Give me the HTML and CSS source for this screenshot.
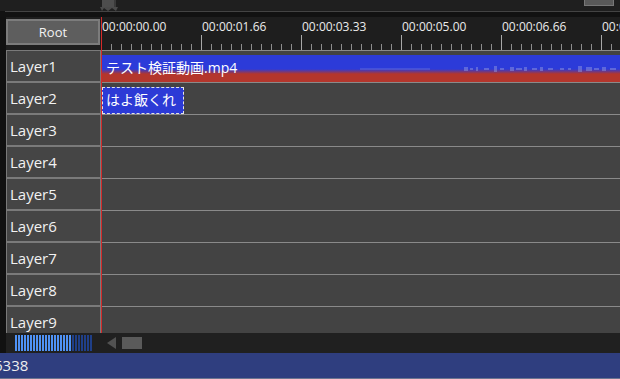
FILE: index.html
```html
<!DOCTYPE html>
<html>
<head>
<meta charset="utf-8">
<link rel="stylesheet" href="styles.css">
</head>
<body>
<div class="app">
  <div class="topbar">
    <svg class="marker" width="20" height="11" viewBox="0 0 20 11">
      <rect x="2" y="0" width="12" height="7" fill="#4d4d4d"/>
      <polygon points="0,7 18,7 16,11 12,8 8,11 4,8 2,11" fill="#4a4a4a"/>
      <rect x="14" y="0" width="2" height="7" fill="#3a3a3a"/>
    </svg>
    <div class="topbox"></div>
  </div>
  <div class="topline"></div>
  <div class="gap"></div>
  <div class="main">
    <div class="row header">
      <div class="labelcol"><div class="root">Root</div></div>
      <div class="ruler">
        <div class="labels">
          <span>00:00:00.00</span><span>00:00:01.66</span><span>00:00:03.33</span><span>00:00:05.00</span><span>00:00:06.66</span><span>00:00:08.33</span>
        </div>
        <div class="ticks"></div>
      </div>
    </div>
    <div class="row">
      <div class="label">Layer1</div>
      <div class="track">
        <div class="clip video">
          <span class="cliptext">テスト検証動画.mp4</span>
          <svg class="wave" width="260" height="8" viewBox="0 0 260 8">
            <g fill="#9aa0e0" opacity="0.45">
              <rect x="0" y="3.5" width="70" height="1"/>
              <rect x="104" y="2" width="4" height="4"/><rect x="110" y="3" width="3" height="2"/><rect x="116" y="2" width="2" height="4"/>
              <rect x="124" y="3" width="5" height="2"/><rect x="134" y="1" width="3" height="6"/><rect x="140" y="3" width="4" height="2"/>
              <rect x="150" y="2" width="4" height="4"/><rect x="156" y="3" width="6" height="2"/><rect x="164" y="2" width="3" height="4"/>
              <rect x="172" y="3" width="5" height="2"/><rect x="180" y="2" width="3" height="4"/><rect x="188" y="3" width="5" height="2"/>
              <rect x="200" y="3" width="4" height="2"/><rect x="208" y="3" width="3" height="2"/><rect x="218" y="1" width="4" height="6"/>
              <rect x="226" y="2" width="6" height="4"/><rect x="234" y="3" width="5" height="2"/><rect x="242" y="2" width="4" height="4"/><rect x="250" y="3" width="6" height="2"/>
            </g>
          </svg>
        </div>
      </div>
    </div>
    <div class="row">
      <div class="label">Layer2</div>
      <div class="track"><div class="clip text">はよ飯くれ</div></div>
    </div>
    <div class="row"><div class="label">Layer3</div><div class="track"></div></div>
    <div class="row"><div class="label">Layer4</div><div class="track"></div></div>
    <div class="row"><div class="label">Layer5</div><div class="track"></div></div>
    <div class="row"><div class="label">Layer6</div><div class="track"></div></div>
    <div class="row"><div class="label">Layer7</div><div class="track"></div></div>
    <div class="row"><div class="label">Layer8</div><div class="track"></div></div>
    <div class="row"><div class="label">Layer9</div><div class="track"></div></div>
    <div class="playhead"></div>
  </div>
  <div class="scrollbar">
    <div class="meter"><div class="meter-on"></div><div class="meter-off"></div></div>
    <div class="arrow"></div>
    <div class="thumb"></div>
  </div>
  <div class="status"><span class="status-text">6338</span></div>
</div>
</body>
</html>
```
FILE: styles.css
```css
* { box-sizing: border-box; }
html, body { margin: 0; padding: 0; }
body {
  width: 620px;
  height: 379px;
  overflow: hidden;
  background: #111111;
  font-family: "Open Sans", "Noto Sans CJK JP", sans-serif;
  color: #f0f0f0;
}
.app { width: 620px; height: 379px; display: flex; flex-direction: column; }

.topbar {
  height: 11px;
  background: #1f1f1f;
  position: relative;
}
.marker { position: absolute; left: 100px; top: 0; }
.topbox {
  position: absolute;
  left: 584px;
  top: 0;
  width: 30px;
  height: 6px;
  background: #595959;
  border: 1px solid #777777;
  border-top: none;
}
.topline { height: 1px; background: #444444; margin-left: 5px; }
.gap { height: 5px; background: #121212; }

.main {
  position: relative;
  height: 316px;
  overflow: hidden;
  padding-left: 6px;
  background: #111111;
}
.row { display: flex; height: 32px; }
.row.header { height: 33px; }

.labelcol {
  width: 95px;
  background: #1e1e1e;
  padding-top: 2px;
}
.root {
  width: 94px;
  height: 26px;
  background: #5e5e5e;
  border: 2px solid #7c7c7c;
  color: #f2f2f2;
  font-size: 13px;
  display: flex;
  align-items: center;
  justify-content: center;
}
.ruler {
  flex: 1;
  background: #1e1e1e;
  display: flex;
  flex-direction: column;
  justify-content: space-between;
}
.labels {
  display: flex;
  padding-top: 2px;
  white-space: nowrap;
}
.labels span {
  flex: none;
  width: 100px;
  padding-left: 2px;
  font-size: 12px;
  line-height: 16px;
  color: #ececec;
}
.ticks {
  height: 16px;
  background-image:
    repeating-linear-gradient(to right, #a8a8a8 0 1px, transparent 1px 100px),
    repeating-linear-gradient(to right, #8e8e8e 0 1px, transparent 1px 10px);
  background-size: 100% 16px, 100% 7px;
  background-position: 1px 0, 1px 9px;
  background-repeat: no-repeat;
}

.label {
  width: 95px;
  height: 32px;
  background: #454545;
  border: 1px solid #7a7a7a;
  font-size: 15px;
  line-height: 30px;
  padding-left: 3px;
  color: #f2f2f2;
}
.track {
  flex: 1;
  background: #434343;
  border-top: 1px solid #8a8a8a;
  padding-top: 4px;
}
.clip {
  margin-left: 1px;
  height: 27px;
  font-size: 14px;
  color: #ffffff;
}
.clip.video {
  position: relative;
  background: linear-gradient(to bottom, #2c3bd9 0, #2c3bd9 14px, #b4362c 19px, #b4362c 100%);
  padding-left: 4px;
  line-height: 26px;
  white-space: nowrap;
}
.wave { position: absolute; left: 258px; top: 10px; }
.clip.text {
  width: 82px;
  background: #2c3ad6;
  border: 1px dashed #e4e4e4;
  padding-left: 3px;
  line-height: 24px;
}

.playhead {
  position: absolute;
  left: 101px;
  top: 0;
  bottom: 0;
  width: 1px;
  background: #d42a2a;
}

.scrollbar {
  height: 20px;
  margin-left: 6px;
  background: #202020;
  display: flex;
  align-items: center;
  padding-left: 9px;
}
.meter { display: flex; height: 16px; width: 78px; }
.meter-on {
  width: 57px;
  background: repeating-linear-gradient(to right, #4f92f5 0 2px, transparent 2px 3px);
}
.meter-off {
  width: 21px;
  background: repeating-linear-gradient(to right, #1f3f88 0 2px, transparent 2px 3px);
}
.arrow {
  margin-left: 14px;
  width: 0;
  height: 0;
  border-top: 6px solid transparent;
  border-bottom: 6px solid transparent;
  border-right: 9px solid #525252;
}
.thumb {
  margin-left: 6px;
  width: 20px;
  height: 12px;
  background: #5a5a5a;
}

.status {
  height: 26px;
  background: #2f3e7f;
  border-bottom: 1px solid #6d7590;
  overflow: hidden;
}
.status-text {
  display: block;
  margin-left: -6px;
  font-size: 15px;
  line-height: 25px;
  color: #eeeeee;
}
```
